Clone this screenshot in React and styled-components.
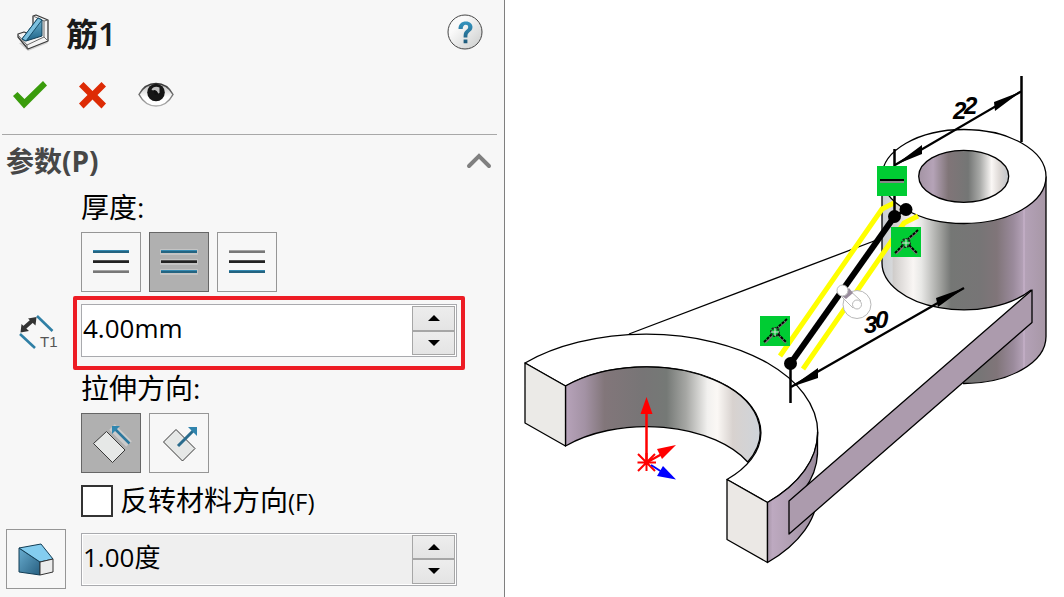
import React from 'react';
import styled, { createGlobalStyle, css } from 'styled-components';

const GlobalStyle = createGlobalStyle`
  *, *::before, *::after { box-sizing: border-box; }
  body {
    margin: 0;
    background: #fff;
    color: #000;
    font-family: "Open Sans", "Noto Sans CJK SC", sans-serif;
  }
  button, input { font: inherit; color: inherit; }
  svg { display: block; }
`;

const Page = styled.main`
  display: grid;
  grid-template-columns: minmax(0, 505fr) minmax(0, 559fr);
  min-height: 100vh;
`;

const Panel = styled.form`
  background: #f7f7f7;
  border-right: 1px solid #7f7f7f;
`;

const Header = styled.header`
  display: flex;
  align-items: center;
  gap: 16px;
  height: 64px;
  padding: 0 21px 0 15px;
`;

const Title = styled.h1`
  flex: 1;
  margin: 0;
  padding-top: 4px;
  font-size: 32px;
  line-height: 32px;
  font-weight: 600;
  color: #1a1a1a;
`;

const IconButton = styled.button`
  display: grid;
  place-items: center;
  padding: 0;
  border: 0;
  background: none;
`;

const Toolbar = styled.div`
  display: flex;
  align-items: center;
  gap: 30px;
  height: 62px;
  margin-bottom: 8px;
  padding-left: 12px;
`;

const Section = styled.section`
  margin: 0 7px 0 2px;
  border-top: 1px solid #a8a8a8;
`;

const SectionHeader = styled.div`
  display: flex;
  align-items: center;
  justify-content: space-between;
  height: 56px;
  padding: 0 5px 4px 4px;
`;

const SectionTitle = styled.h2`
  margin: 0;
  font-size: 28px;
  line-height: 32px;
  font-weight: 700;
  color: #474747;
`;

const Fields = styled.div`
  padding: 0 40px 8px 79px;
`;

const FieldLabel = styled.div`
  margin-bottom: 9px;
  font-size: 28px;
  line-height: 32px;
`;

const Options = styled.div`
  display: flex;
  gap: 8px;
`;

const OptionButton = styled.button`
  display: grid;
  place-items: center;
  flex: none;
  width: 60px;
  height: 60px;
  padding: 0;
  border: 1px solid #969696;
  background: #f7f7f7;
  ${(p) => p.$active && css`
    border-color: #666;
    background: #b0b0b0;
  `}
`;

const FieldRow = styled.div`
  display: flex;
  align-items: center;
  margin-left: -75px;
`;

const Lead = styled.div`
  flex: none;
  display: flex;
  width: ${(p) => p.$width}px;
  padding-left: ${(p) => p.$inset}px;
`;

const Highlight = styled.div`
  flex: 1;
  min-width: 0;
  margin: 4px -8px 2px 0;
  padding: 4px 4px 9px;
  border: 4px solid #ed1c24;
  border-radius: 2px;
`;

const SpinnerBox = styled.div`
  display: flex;
  flex: 1;
  min-width: 0;
  height: 53px;
  padding: 1px;
  border: 1px solid #a9aaae;
  background: #fff;
`;

const SpinnerInput = styled.input`
  flex: 1;
  min-width: 0;
  padding: 0 0 6px;
  border: 0;
  outline: 0;
  font-size: 26px;
  background: ${(p) => (p.$muted ? '#efefef' : '#fff')};
`;

const Steps = styled.div`
  display: grid;
  flex: none;
  grid-template-rows: 1fr 1fr;
  width: 43px;
`;

const Step = styled.button`
  display: grid;
  place-items: center;
  padding: 0;
  border: 1px solid #a6a6a6;
  background: linear-gradient(#ededed, #e4e4e4);
`;

const CheckLabel = styled.label`
  display: flex;
  align-items: center;
  gap: 7px;
  height: 32px;
  margin: 12px 0;
  font-size: 28px;
  line-height: 32px;
`;

const Accel = styled.span`
  font-size: 24px;
`;

const Checkbox = styled.input`
  appearance: none;
  width: 32px;
  height: 32px;
  margin: 0;
  border: 2px solid #333;
  background: #fff;
  &:checked { background: #333; }
`;

const Viewport = styled.section`
  background: #fff;
  & > svg { width: 100%; height: auto; }
`;

const DimText = styled.text`
  font-family: "Liberation Sans", sans-serif;
  font-size: 24px;
  font-weight: 700;
  font-style: italic;
`;

function RibIcon() {
  return (
    <svg width="35" height="40" viewBox="15 12 35 40" aria-hidden="true">
      <defs>
        <linearGradient id="rib" x1="0" y1="0" x2="0" y2="1">
          <stop offset="0" stopColor="#6fb6d6" />
          <stop offset="1" stopColor="#1f6488" />
        </linearGradient>
      </defs>
      <path d="M19 43L28 51L48 43L45 39Z" fill="#d0d0d0" />
      <path d="M33 16L36 15L48 20V41L28 49L18 37V34L24 32L33 35Z" fill="#f4f4f4" stroke="#3a3a3a" strokeWidth="1.300" strokeLinejoin="round" />
      <path d="M33 16L44 21V37L48 41M44 21L48 20M44 37L27 45L18 35M27 45V49" fill="none" stroke="#6a6a6a" />
      <path d="M38 18L42 20V36L26 41L22 39Z" fill="url(#rib)" stroke="#123e55" strokeLinejoin="round" />
      <path d="M38 18L42 20L26 41L22 39Z" fill="#7cc0df" stroke="#174d68" strokeLinejoin="round" />
    </svg>
  );
}

function HelpIcon() {
  return (
    <svg width="36" height="36" viewBox="0 0 36 36" aria-hidden="true">
      <defs>
        <linearGradient id="help" x1="0" y1="0" x2="1" y2="1">
          <stop offset=".3" stopColor="#fafafa" />
          <stop offset="1" stopColor="#c9cbca" />
        </linearGradient>
        <linearGradient id="mark" x1="0" y1="0" x2="0" y2="1">
          <stop offset="0" stopColor="#3595c0" />
          <stop offset="1" stopColor="#1d597a" />
        </linearGradient>
      </defs>
      <circle cx="18" cy="18" r="17" fill="url(#help)" stroke="#454545" />
      <path d="M11.500 15C11.500 10 14.500 7.500 19 7.500C23 7.500 25.500 10 25.500 13C25.500 16 23.500 17.200 21.800 18.700C20.400 20 20.400 21 20.400 23.500H16.600C16.600 20.500 16.700 18.500 18.500 16.800C20 15.300 21.200 14.800 21.200 13C21.200 11.600 20.300 10.800 18.800 10.800C16.700 10.800 15.800 12.500 15.700 15ZM16.600 25.500H20.400V29.300H16.600Z" fill="url(#mark)" />
    </svg>
  );
}

function CheckIcon() {
  return (
    <svg width="36" height="30" viewBox="0 0 36 30" aria-hidden="true">
      <path d="M1 16L5.500 12L12.500 19L31 1L35 5.500L12 28.500Z" fill="#3a9c0c" />
    </svg>
  );
}

function CrossIcon() {
  return (
    <svg width="30" height="30" viewBox="0 0 30 30" aria-hidden="true">
      <path d="M5.500 2L14.500 11L23.500 2L28 6.500L19.500 15L28 23.500L23.500 28.500L14.500 19.500L5.500 28.500L1 23.500L9.500 15L1 6.500Z" fill="#dd2b05" />
    </svg>
  );
}

function EyeIcon() {
  return (
    <svg width="36" height="26" viewBox="0 0 36 26" aria-hidden="true">
      <defs>
        <linearGradient id="lid" x1="0" y1="0" x2="0" y2="1">
          <stop offset="0" stopColor="#333" />
          <stop offset="1" stopColor="#b0b0b0" />
        </linearGradient>
        <linearGradient id="white" x1="0" y1="0" x2="0" y2="1">
          <stop offset="0" stopColor="#b8b8b8" />
          <stop offset=".6" stopColor="#fff" />
        </linearGradient>
      </defs>
      <path d="M1 12.500C5 5 11 1.500 18 1.500S31 5 35 12.500C31 20 25 24 18 24S5 20 1 12.500Z" fill="url(#white)" stroke="url(#lid)" strokeWidth="1.500" />
      <circle cx="18" cy="10.500" r="8.800" fill="#161616" />
      <path d="M13.500 8C14.500 5 18 4 21.500 5.500V11L20 11.500C19 10 16.500 8.500 13.500 8Z" fill="#ddd" opacity=".85" />
      <path d="M15.500 8A4 4 0 0 1 20 12L17 13Z" fill="#111" />
    </svg>
  );
}

const LINE_COLORS = { blue: ['#3489b1', '#246481'], dark: ['#515151', '#222'], gray: ['#a4a4a4', '#787878'] };

function LinesIcon({ colors, glow }) {
  return (
    <svg width="40" height="30" viewBox="0 0 40 30" aria-hidden="true">
      {colors.map((c, i) => (
        <g key={i}>
          {glow && <rect x="1" y={2 + i * 10} width="38" height="6" rx="1" fill="#fff" opacity=".25" />}
          <rect x="2" y={3 + i * 10} width="36" height="1" fill={LINE_COLORS[c][0]} />
          <rect x="2" y={4 + i * 10} width="36" height="2" fill={LINE_COLORS[c][1]} />
        </g>
      ))}
    </svg>
  );
}

function ThicknessIcon() {
  return (
    <svg width="42" height="38" viewBox="17 311 42 38" aria-hidden="true">
      <path d="M37 314L52.500 329" stroke="#2f7fa5" strokeWidth="2.600" />
      <path d="M20 332L35 346" stroke="#2f7fa5" strokeWidth="2.600" />
      <path d="M24 326L33 318" stroke="#333" strokeWidth="4" />
      <path d="M36.500 315L28 316.500L35.500 323.500Z M20.500 330.500L21.500 322L29 329Z" fill="#333" />
      <text x="40" y="345" fontFamily="Liberation Sans" fontSize="15" fill="#555">T1</text>
    </svg>
  );
}

function ParallelIcon() {
  return (
    <svg width="60" height="60" viewBox="0 0 60 60" aria-hidden="true">
      <path d="M30 13L47 30" stroke="#fff" strokeWidth="8" opacity=".35" />
      <path d="M24.500 17.500L43 36L30.500 48.500L11.500 29.500Z" fill="#e6e8e7" stroke="#383838" />
      <path d="M33 15L47.500 29.500" stroke="#2d789e" strokeWidth="2.500" />
      <path d="M30 12H38L30 20Z" fill="#3187b0" />
    </svg>
  );
}

function NormalIcon() {
  return (
    <svg width="60" height="60" viewBox="0 0 60 60" aria-hidden="true">
      <path d="M26 15.500L45 34.500L32.500 47L13.500 28Z" fill="#e6e8e7" stroke="#383838" />
      <path d="M28 32L43 17" stroke="#2a6c8d" strokeWidth="3" />
      <path d="M47 13V22L38 13Z" fill="#3084ad" />
    </svg>
  );
}

function DraftIcon() {
  return (
    <svg width="40" height="38" viewBox="0 0 40 38" aria-hidden="true">
      <defs>
        <linearGradient id="draft" x1="0" y1="0" x2="1" y2="1">
          <stop offset="0" stopColor="#69add0" />
          <stop offset="1" stopColor="#275f80" />
        </linearGradient>
      </defs>
      <path d="M3 8L24 22V35L3 32Z" fill="url(#draft)" stroke="#123d55" strokeLinejoin="round" />
      <path d="M3 8L25 4L37 19L24 22Z" fill="#84cdef" stroke="#123d55" strokeLinejoin="round" />
      <path d="M24 22L37 19V32L24 35Z" fill="#ececec" stroke="#333" strokeLinejoin="round" />
    </svg>
  );
}

function Spinner({ label, value, muted }) {
  return (
    <SpinnerBox>
      <SpinnerInput aria-label={label} defaultValue={value} $muted={muted} />
      <Steps>
        <Step type="button" aria-label={`${label} +`}>
          <svg width="12" height="6" viewBox="0 0 12 6"><path d="M0 6L6 0L12 6Z" /></svg>
        </Step>
        <Step type="button" aria-label={`${label} -`}>
          <svg width="12" height="6" viewBox="0 0 12 6"><path d="M0 0L6 6L12 0Z" /></svg>
        </Step>
      </Steps>
    </SpinnerBox>
  );
}

function TangentTag({ x, y }) {
  return (
    <g transform={`translate(${x} ${y})`}>
      <rect width="30" height="30" fill="#00cc33" />
      <path d="M5 27L12 20M26 5L18 12M19 20L26 27" stroke="#777" strokeWidth="2" />
      <path d="M4 26L12 18M27 3L17 12M18 18L26 26" stroke="#000" strokeWidth="2" strokeDasharray="3 1" />
      <circle cx="15" cy="16" r="4" fill="none" stroke="#222" strokeWidth="2" strokeDasharray="2 1" />
      <path d="M15 12V20M11 16H19" stroke="#ddd" />
    </g>
  );
}

function Model() {
  return (
    <svg viewBox="505 0 559 597" role="img" aria-label="Model">
      <defs>
        <linearGradient id="cyl" gradientUnits="userSpaceOnUse" x1="882" y1="0" x2="1046" y2="0">
          <stop offset="0" stopColor="#c9ccd0" />
          <stop offset=".06" stopColor="#d6d8da" />
          <stop offset=".07" stopColor="#d0cdcb" />
          <stop offset=".19" stopColor="#f9f6f4" />
          <stop offset=".24" stopColor="#e8e8e6" />
          <stop offset=".36" stopColor="#9d9e9b" />
          <stop offset=".42" stopColor="#757775" />
          <stop offset=".6" stopColor="#777576" />
          <stop offset=".7" stopColor="#807579" />
          <stop offset=".8" stopColor="#9a8a9b" />
          <stop offset=".86" stopColor="#b3a1b6" />
          <stop offset=".865" stopColor="#c9b3cc" />
          <stop offset=".875" stopColor="#b3a1b6" />
          <stop offset="1" stopColor="#a797a6" />
        </linearGradient>
        <linearGradient id="hole" x1="0" y1="0" x2="1" y2="0">
          <stop offset="0" stopColor="#a494a4" />
          <stop offset=".16" stopColor="#b5a3b7" />
          <stop offset=".33" stopColor="#807578" />
          <stop offset=".55" stopColor="#747675" />
          <stop offset=".68" stopColor="#a8a9a7" />
          <stop offset=".81" stopColor="#faf7f5" />
          <stop offset=".9" stopColor="#ddd8d5" />
          <stop offset="1" stopColor="#bfc3c8" />
        </linearGradient>
        <linearGradient id="fork" x1="0" y1="0" x2="1" y2="0">
          <stop offset="0" stopColor="#b7a3ba" />
          <stop offset=".1" stopColor="#a392a4" />
          <stop offset=".2" stopColor="#82767a" />
          <stop offset=".4" stopColor="#777576" />
          <stop offset=".52" stopColor="#757976" />
          <stop offset=".62" stopColor="#a6a7a4" />
          <stop offset=".73" stopColor="#f2f1ef" />
          <stop offset=".78" stopColor="#fbf8f5" />
          <stop offset=".86" stopColor="#d8d2cf" />
          <stop offset="1" stopColor="#cfd4da" />
        </linearGradient>
        <linearGradient id="wall" x1="0" y1="0" x2="1" y2="0">
          <stop offset="0" stopColor="#a796a9" />
          <stop offset=".1" stopColor="#bda9c0" />
          <stop offset=".5" stopColor="#b09fb2" />
          <stop offset="1" stopColor="#998a9b" />
        </linearGradient>
      </defs>

      <g stroke="#000" strokeWidth="1.300" strokeLinejoin="round">
        <path d="M629 334L882 238" fill="none" />
        <path d="M964 310L1046 250V336.500A82 47 0 0 1 963 383.500Z" fill="url(#cyl)" stroke="none" />
        <path d="M882 310L964 310A82 47 0 0 0 1031 290L963 383L882 383Z" fill="#fff" stroke="none" />
        <path d="M882 176.500V263A82 47 0 0 0 1031 290L1046 280V176.500Z" fill="url(#cyl)" stroke="none" />
        <path d="M882 176.500V263A82 47 0 0 0 1031 290M1046 176.500V336.500A82 47 0 0 1 963 383.500" fill="none" />
        <ellipse cx="964" cy="176.500" rx="82" ry="47" fill="#fff" />
        <ellipse cx="963.700" cy="176.300" rx="45" ry="26" fill="url(#hole)" />

        <path d="M525 363A171 98.300 0 1 1 767.500 502.500L727 479.500A114 65.500 0 1 0 565.500 386Z" fill="#fff" />
        <path d="M565.500 386A114 65.500 0 0 1 747.700 462A114 65.500 0 0 0 565.500 446Z" fill="url(#fork)" />
        <path d="M525 363L565.500 386V446L525 423Z" fill="#ebeae7" />
        <path d="M727 479.500L767.500 502.500V562.500L727 539.500Z" fill="#ebe8e5" />
        <path d="M767.500 502.500A171 98.300 0 0 0 817.500 432V492A171 98.300 0 0 1 767.500 562.500Z" fill="url(#wall)" />
        <path d="M817.500 454A171 98.300 0 0 1 804 490L822 474V454Z" fill="#fff" stroke="none" />
        <path d="M817.500 454A171 98.300 0 0 1 804 490" fill="none" />
        <path d="M789 501L1032 290V322.500L789 534Z" fill="#ac9bad" />
      </g>

      <g stroke="#ff0" strokeWidth="5" fill="none">
        <path d="M780 356L882 209L894 203" />
        <path d="M803 369L904 223L918 216" />
      </g>
      <g stroke="#000" fill="none">
        <path d="M790.500 363.500L894.500 216.500" strokeWidth="6" />
        <path d="M894.500 216.500L906 209.500" strokeWidth="3" />
        <path d="M1021.500 76V142M894.500 149V216M790.500 363V403" strokeWidth="2.500" />
        <path d="M895 165L1021 91.500M791 387L964 288" strokeWidth="2.300" />
      </g>
      <path d="M1021 91.500L995 111L994 102ZM895 165L922 145L922 154ZM964 288L938 307L936 298ZM791 387L818 368V378Z" />
      <circle cx="790.500" cy="363.500" r="6.500" />
      <circle cx="894.500" cy="216.500" r="6.500" />
      <circle cx="906" cy="209.500" r="6.500" />
      <DimText x="953 964" y="119 114">22</DimText>
      <DimText x="864 875" y="333 328">30</DimText>

      <rect x="877" y="166" width="30" height="30" fill="#00cc33" />
      <path d="M880 182H904" stroke="#888" strokeWidth="2" />
      <path d="M880 180H904" stroke="#000" strokeWidth="2" />
      <TangentTag x={891} y={227} />
      <TangentTag x={760} y={316} />

      <g fill="#fff" stroke="#b8b8b8">
        <circle cx="857" cy="304.500" r="14" />
        <path d="M839 294L853 308L861 301L846 287Z" />
        <path d="M842 296L849 288L853 293L846 299Z" fill="#998c9d" stroke="none" />
        <circle cx="842.500" cy="290.500" r="5.500" />
        <circle cx="857" cy="304.500" r="4.500" />
      </g>

      <g stroke="#f00" strokeWidth="2.500" fill="#f00">
        <path d="M646.500 462.500V412" />
        <path d="M637.500 462.500H656M646.500 453V471M638 454L655 471M655 454L638 471" strokeWidth="2" />
        <path d="M646.500 462.500L662 454" />
        <path d="M646.500 397L652.500 414H640.500Z" stroke="none" />
        <path d="M676 445L657 449L662 459Z" stroke="none" />
      </g>
      <path d="M651 465L662 472" stroke="#00f" strokeWidth="2" />
      <path d="M676 479.500L657 476L663 466Z" fill="#00f" />
    </svg>
  );
}

export default function App() {
  return (
    <>
      <GlobalStyle />
      <Page>
        <Panel onSubmit={(e) => e.preventDefault()}>
          <Header>
            <RibIcon />
            <Title>筋1</Title>
            <IconButton type="button" aria-label="帮助"><HelpIcon /></IconButton>
          </Header>
          <Toolbar>
            <IconButton type="button" aria-label="确定"><CheckIcon /></IconButton>
            <IconButton type="button" aria-label="取消"><CrossIcon /></IconButton>
            <IconButton type="button" aria-label="预览"><EyeIcon /></IconButton>
          </Toolbar>
          <Section>
            <SectionHeader>
              <SectionTitle>参数(P)</SectionTitle>
              <IconButton type="button" aria-label="折叠">
                <svg width="26" height="18" viewBox="0 0 26 18">
                  <path d="M3 14L13 4L23 14" fill="none" stroke="#808080" strokeWidth="4" strokeLinecap="round" />
                </svg>
              </IconButton>
            </SectionHeader>
            <Fields>
              <FieldLabel>厚度:</FieldLabel>
              <Options>
                <OptionButton type="button" aria-label="第一边"><LinesIcon colors={['blue', 'dark', 'gray']} /></OptionButton>
                <OptionButton type="button" aria-label="两侧" $active><LinesIcon glow colors={['blue', 'dark', 'blue']} /></OptionButton>
                <OptionButton type="button" aria-label="第二边"><LinesIcon colors={['gray', 'dark', 'blue']} /></OptionButton>
              </Options>
              <FieldRow>
                <Lead $width={67} $inset={11}><ThicknessIcon /></Lead>
                <Highlight><Spinner label="厚度" value="4.00mm" /></Highlight>
              </FieldRow>
              <FieldLabel>拉伸方向:</FieldLabel>
              <Options>
                <OptionButton type="button" aria-label="平行于草图" $active><ParallelIcon /></OptionButton>
                <OptionButton type="button" aria-label="垂直于草图"><NormalIcon /></OptionButton>
              </Options>
              <CheckLabel>
                <Checkbox type="checkbox" />
                <span>反转材料方向<Accel>(F)</Accel></span>
              </CheckLabel>
              <FieldRow>
                <Lead $width={75} $inset={0}>
                  <OptionButton type="button" aria-label="拔模开/关"><DraftIcon /></OptionButton>
                </Lead>
                <Spinner label="拔模角度" value="1.00度" muted />
              </FieldRow>
            </Fields>
          </Section>
        </Panel>
        <Viewport>
          <Model />
        </Viewport>
      </Page>
    </>
  );
}
